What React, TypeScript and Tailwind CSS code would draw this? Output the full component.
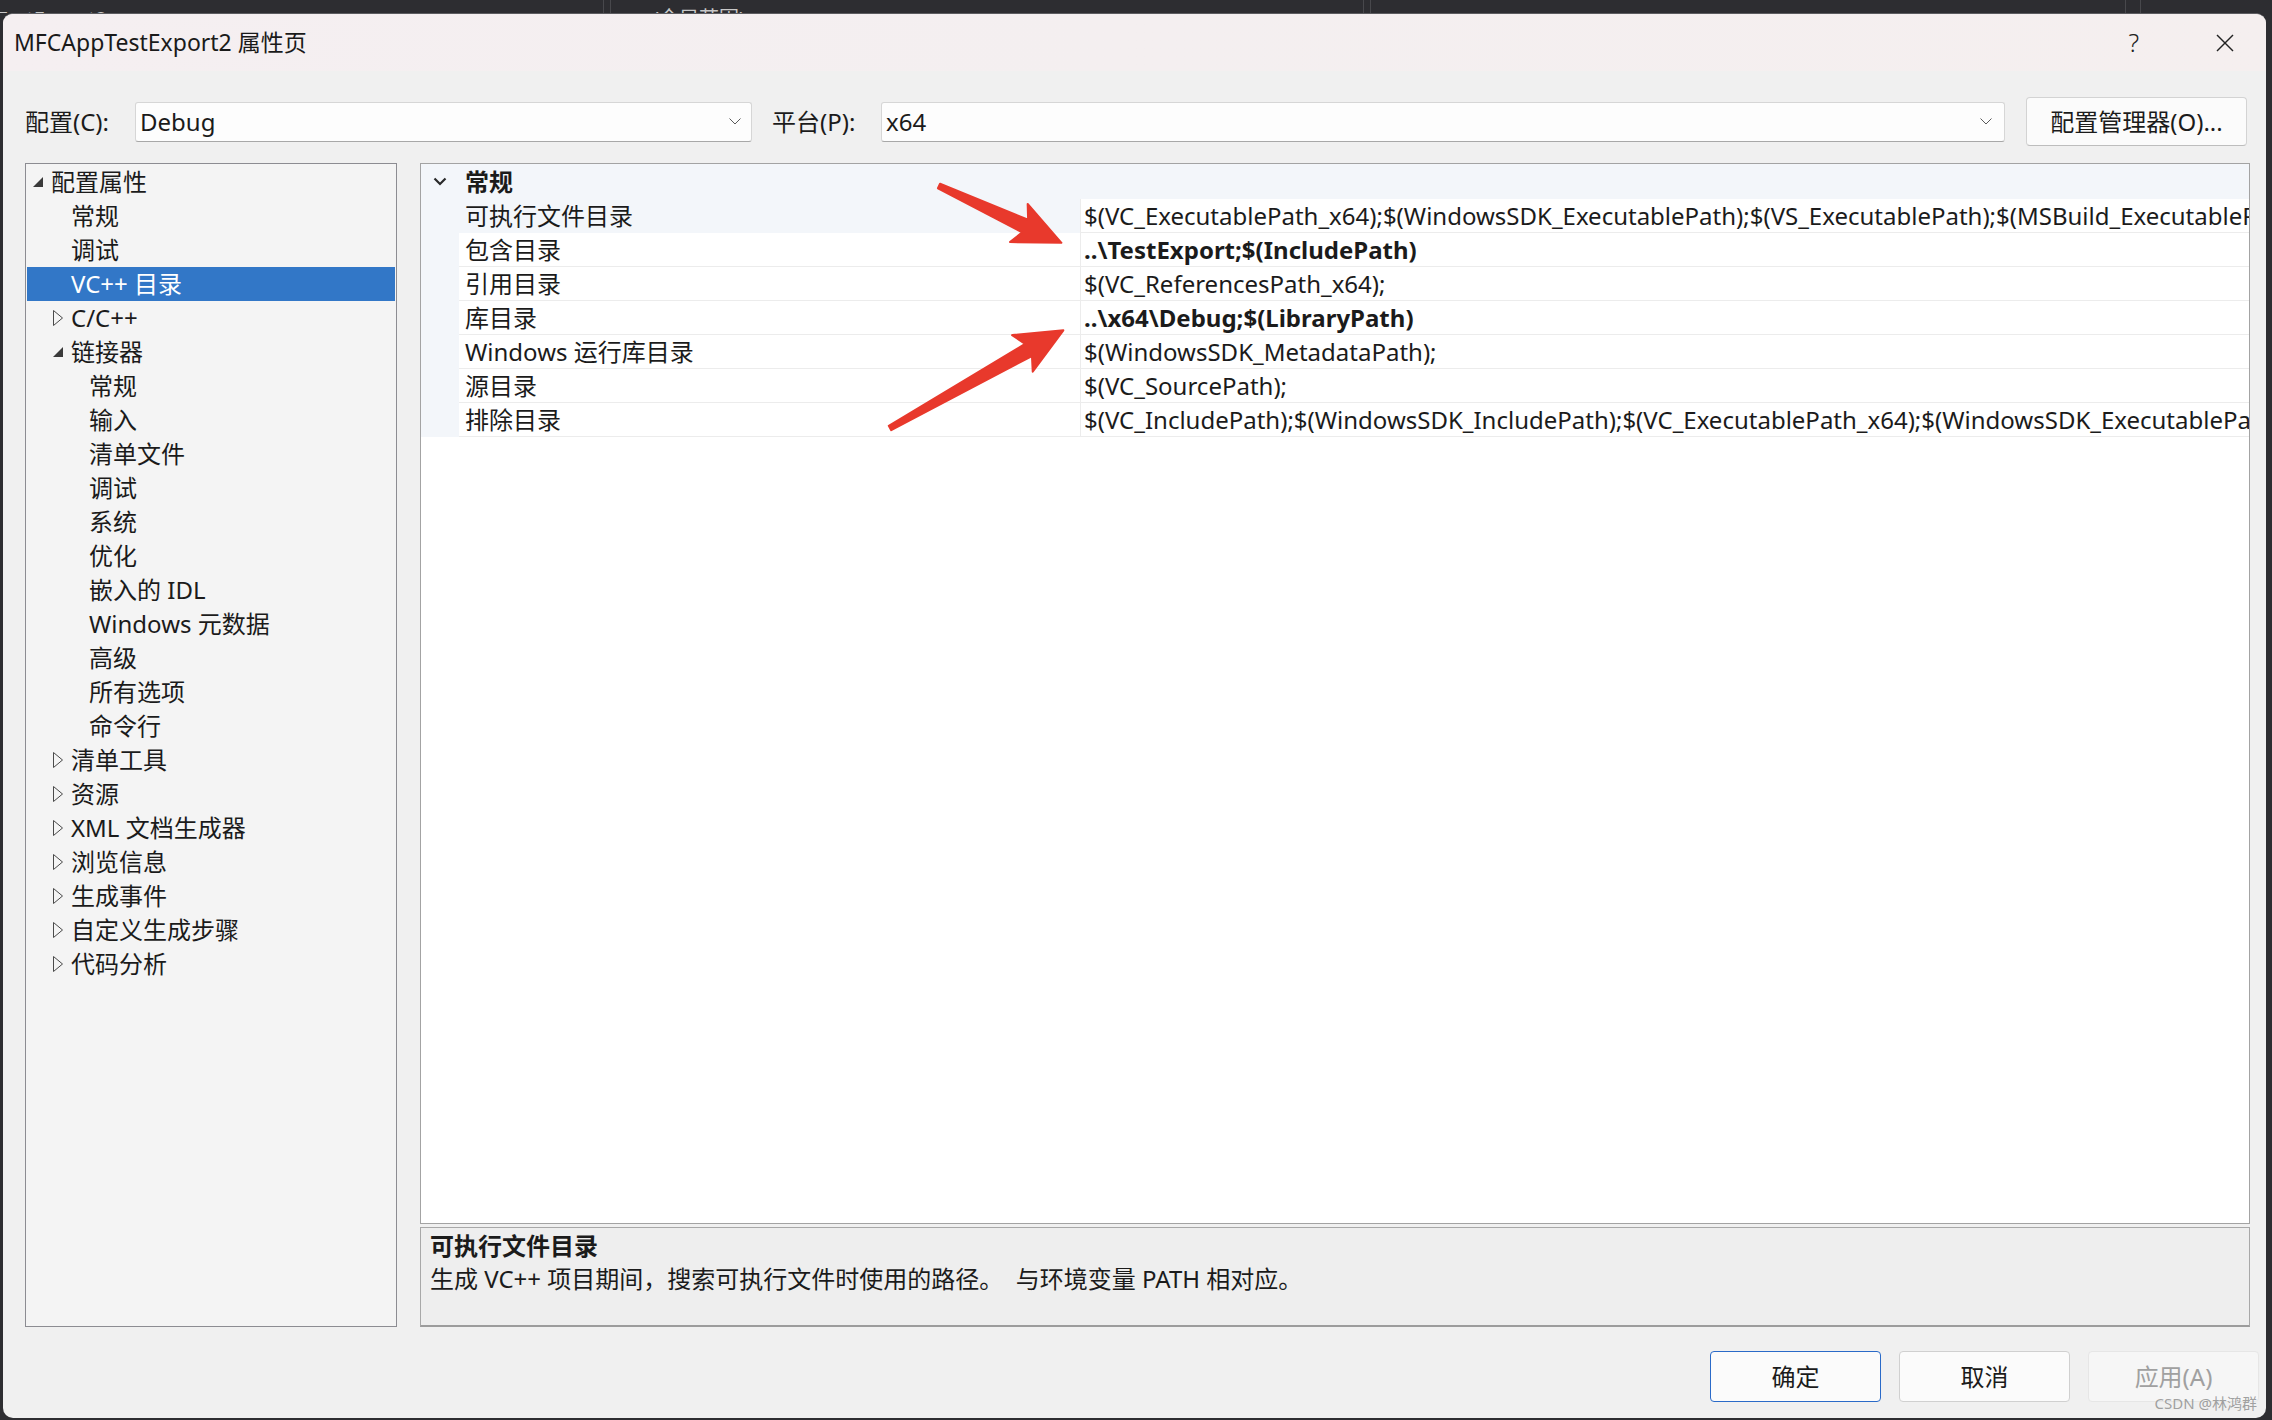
import React from 'react';

type TreeItem = { label: string; level: 0 | 1 | 2; arrow?: 'open' | 'closed'; selected?: boolean };

const TREE: TreeItem[] = [
  { label: '配置属性', level: 0, arrow: 'open' },
  { label: '常规', level: 1 },
  { label: '调试', level: 1 },
  { label: 'VC++ 目录', level: 1, selected: true },
  { label: 'C/C++', level: 1, arrow: 'closed' },
  { label: '链接器', level: 1, arrow: 'open' },
  { label: '常规', level: 2 },
  { label: '输入', level: 2 },
  { label: '清单文件', level: 2 },
  { label: '调试', level: 2 },
  { label: '系统', level: 2 },
  { label: '优化', level: 2 },
  { label: '嵌入的 IDL', level: 2 },
  { label: 'Windows 元数据', level: 2 },
  { label: '高级', level: 2 },
  { label: '所有选项', level: 2 },
  { label: '命令行', level: 2 },
  { label: '清单工具', level: 1, arrow: 'closed' },
  { label: '资源', level: 1, arrow: 'closed' },
  { label: 'XML 文档生成器', level: 1, arrow: 'closed' },
  { label: '浏览信息', level: 1, arrow: 'closed' },
  { label: '生成事件', level: 1, arrow: 'closed' },
  { label: '自定义生成步骤', level: 1, arrow: 'closed' },
  { label: '代码分析', level: 1, arrow: 'closed' },
];

const INDENT = { 0: 'pl-[6px]', 1: 'pl-[26px]', 2: 'pl-[44px]' };

const PROPS = [
  {
    name: '可执行文件目录',
    value: '$(VC_ExecutablePath_x64);$(WindowsSDK_ExecutablePath);$(VS_ExecutablePath);$(MSBuild_ExecutablePath);$(FxCopDir);$(PATH);',
    current: true,
  },
  { name: '包含目录', value: '..\\TestExport;$(IncludePath)', bold: true },
  { name: '引用目录', value: '$(VC_ReferencesPath_x64);' },
  { name: '库目录', value: '..\\x64\\Debug;$(LibraryPath)', bold: true },
  { name: 'Windows 运行库目录', value: '$(WindowsSDK_MetadataPath);' },
  { name: '源目录', value: '$(VC_SourcePath);' },
  {
    name: '排除目录',
    value: '$(VC_IncludePath);$(WindowsSDK_IncludePath);$(VC_ExecutablePath_x64);$(WindowsSDK_ExecutablePath);$(VS_ExecutablePath);$(MSBuild_ExecutablePath);',
  },
];

const Chevron = () => (
  <svg width="12" height="7" viewBox="0 0 12 7">
    <polyline points="0.5,0.5 6,6 11.5,0.5" fill="none" stroke="#5a5a5a" strokeWidth="1" />
  </svg>
);

const TreeArrow = ({ kind }: { kind?: 'open' | 'closed' }) => {
  if (kind === 'open')
    return (
      <svg width="10" height="10" viewBox="0 0 10 10">
        <polygon points="10,0 10,10 0,10" fill="#3a3a3a" />
      </svg>
    );
  if (kind === 'closed')
    return (
      <svg width="10" height="16" viewBox="0 0 10 16">
        <polygon points="0.5,0.5 9.5,8 0.5,15.5" fill="none" stroke="#4a4a4a" strokeWidth="1" />
      </svg>
    );
  return null;
};

// red annotation arrow, drawn along +x then rotated into place
const RedArrow = ({ x, y, len, angle }: { x: number; y: number; len: number; angle: number }) => {
  const L = len;
  const pts = [
    [0, -2.5],
    [L - 40, -7],
    [L - 47, -21],
    [L, 0],
    [L - 47, 21],
    [L - 40, 7],
    [0, 2.5],
  ]
    .map((p) => p.join(','))
    .join(' ');
  return (
    <g transform={`translate(${x} ${y}) rotate(${angle})`}>
      <polygon points={pts} fill="#e8392c" stroke="#e8392c" strokeWidth="2" strokeLinejoin="round" />
    </g>
  );
};

export default function App() {
  return (
    <div className="relative w-[2272px] h-[1420px] overflow-hidden bg-[#2d2d31] text-[#1b1b1b] font-['Noto_Sans','Noto_Sans_CJK_SC',sans-serif]">
      {/* background editor strip */}
      <div className="h-[13px] flex overflow-hidden text-[20px] leading-[24px] text-[#c8c8c8]">
        <div className="w-[603px] overflow-hidden">
          <span className="block pt-[7px] ml-[-4px]">TestExport2</span>
        </div>
        <div className="w-[1px] h-full bg-[#48484c]" />
        <div className="w-[6px]" />
        <div className="w-[1px] h-full bg-[#48484c]" />
        <div className="w-[752px] overflow-hidden">
          <span className="block pt-[7px] ml-[42px]">(全局范围)</span>
        </div>
        <div className="w-[1px] h-full bg-[#48484c]" />
        <div className="w-[6px]" />
        <div className="w-[1px] h-full bg-[#48484c]" />
        <div className="w-[754px]" />
        <div className="w-[1px] h-full bg-[#48484c]" />
        <div className="w-[14px]" />
        <div className="w-[1px] h-full bg-[#48484c]" />
      </div>

      {/* dialog */}
      <div className="ml-[3px] w-[2263px] h-[1405px] rounded-[10px] bg-[#f0f0f0] border-t border-[#5c5c60] flex flex-col overflow-hidden">
        {/* title bar */}
        <div className="h-[57px] shrink-0 flex items-center bg-gradient-to-r from-[#f5eff1] via-[#f4eff0] to-[#f5efef] pl-[11px]">
          <span className="text-[23px] text-[#1a1a1a]">MFCAppTestExport2 属性页</span>
          <div className="flex-1" />
          <span className="text-[25px] font-light text-[#222] mr-[77px]">?</span>
          <svg width="18" height="18" viewBox="0 0 18 18" className="mr-[32px]">
            <line x1="1" y1="1" x2="17" y2="17" stroke="#222" strokeWidth="1.4" />
            <line x1="17" y1="1" x2="1" y2="17" stroke="#222" strokeWidth="1.4" />
          </svg>
        </div>

        {/* config row */}
        <div className="mt-[26px] h-[49px] shrink-0 flex items-center pl-[22px] text-[24px]">
          <span className="w-[110px] shrink-0">配置(C):</span>
          <div className="w-[617px] shrink-0 h-[40px] bg-[#fdfdfd] border border-[#d6d6d6] border-b-[#a8a8a8] rounded-[3px] flex items-center pl-[4px] pr-[10px]">
            <span className="flex-1">Debug</span>
            <Chevron />
          </div>
          <span className="ml-[20px] w-[109px] shrink-0">平台(P):</span>
          <div className="w-[1124px] shrink-0 h-[40px] bg-[#fdfdfd] border border-[#d6d6d6] border-b-[#a8a8a8] rounded-[3px] flex items-center pl-[4px] pr-[12px]">
            <span className="flex-1">x64</span>
            <Chevron />
          </div>
          <div className="ml-[21px] w-[221px] shrink-0 h-[49px] bg-[#fbfbfb] border border-[#d3d3d3] border-b-[#bdbdbd] rounded-[4px] flex items-center justify-center">
            配置管理器(O)...
          </div>
        </div>

        {/* main */}
        <div className="mt-[17px] h-[1164px] shrink-0 flex pl-[22px] pr-[16px] gap-[23px] text-[24px]">
          {/* tree */}
          <div className="w-[372px] shrink-0 border border-[#8c8c92] bg-[#f4f4f4] pt-[1px]">
            {TREE.map((t, i) => (
              <div
                key={i}
                className={`mx-[1px] h-[34px] flex items-center leading-[34px] ${INDENT[t.level]} ${
                  t.selected ? 'bg-[#3277c7] text-white' : ''
                }`}
              >
                <div className="w-[18px] flex items-center">
                  <TreeArrow kind={t.arrow} />
                </div>
                <span className="whitespace-nowrap">{t.label}</span>
              </div>
            ))}
          </div>

          {/* right column */}
          <div className="flex-1 min-w-0 flex flex-col gap-[3px]">
            <div className="h-[1061px] border border-[#a3a3a3] bg-white overflow-hidden">
              <div className="h-[35px] bg-[#f3f6fa] flex items-center">
                <div className="w-[38px] flex justify-center">
                  <svg width="14" height="9" viewBox="0 0 14 9">
                    <polyline points="1.5,1.5 7,7 12.5,1.5" fill="none" stroke="#2a2a2a" strokeWidth="2.2" />
                  </svg>
                </div>
                <span className="pl-[6px] font-bold">常规</span>
              </div>
              {PROPS.map((p, i) => (
                <div key={i} className="h-[34px] flex">
                  <div className="w-[38px] shrink-0 bg-[#f3f6fa]" />
                  <div
                    className={`w-[621px] shrink-0 pl-[6px] leading-[33px] border-b border-[#ececec] whitespace-nowrap ${
                      p.current ? 'bg-[#f3f6fa] border-b-[#f3f6fa]' : 'bg-white'
                    }`}
                  >
                    {p.name}
                  </div>
                  <div
                    className={`flex-1 min-w-0 overflow-hidden whitespace-nowrap pl-[3px] leading-[33px] border-l border-b border-[#ececec] ${
                      p.bold ? 'font-bold' : ''
                    }`}
                  >
                    {p.value}
                  </div>
                </div>
              ))}
            </div>
            <div className="h-[100px] border border-[#a8a8a8] border-b-2 border-b-[#9c9c9c] bg-[#eeeeee] pl-[9px] pt-[1px] leading-[33px]">
              <div className="font-bold">可执行文件目录</div>
              <div className="whitespace-pre">生成 VC++ 项目期间，搜索可执行文件时使用的路径。  与环境变量 PATH 相对应。</div>
            </div>
          </div>
        </div>

        {/* buttons */}
        <div className="mt-[24px] h-[51px] shrink-0 flex justify-end gap-[18px] pr-[7px] text-[24px]">
          <div className="w-[171px] h-full rounded-[4px] border border-[#2a6ac8] bg-[#fbfbfb] flex items-center justify-center">确定</div>
          <div className="w-[171px] h-full rounded-[4px] border border-[#d0d0d0] bg-[#fbfbfb] flex items-center justify-center">取消</div>
          <div className="w-[171px] h-full rounded-[4px] border border-[#e6e6e6] bg-[#f6f6f6] text-[#a0a0a0] flex items-center justify-center">应用(A)</div>
        </div>
      </div>

      {/* annotations */}
      <svg className="absolute left-0 top-0 pointer-events-none" width="2272" height="1420">
        <RedArrow x={939} y={186} len={135} angle={24.9} />
        <RedArrow x={890} y={428} len={199} angle={-29.4} />
      </svg>
      <span className="absolute right-[15px] bottom-[6px] text-[15px] text-[#8a8a8a]/80">CSDN @林鸿群</span>
    </div>
  );
}
